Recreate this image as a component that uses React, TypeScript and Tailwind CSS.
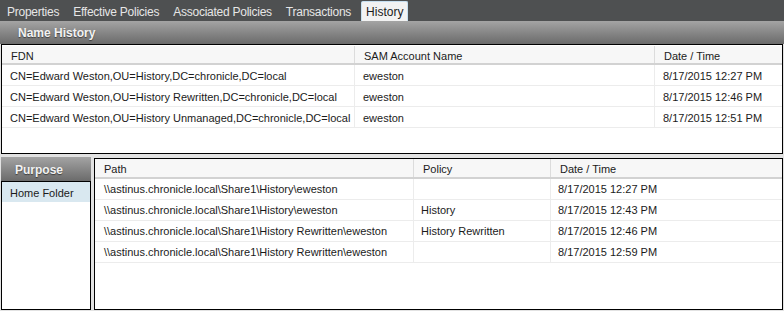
const tabs = ["Properties", "Effective Policies", "Associated Policies", "Transactions", "History"];

const nameRows = [
  ["CN=Edward Weston,OU=History,DC=chronicle,DC=local", "eweston", "8/17/2015 12:27 PM"],
  ["CN=Edward Weston,OU=History Rewritten,DC=chronicle,DC=local", "eweston", "8/17/2015 12:46 PM"],
  ["CN=Edward Weston,OU=History Unmanaged,DC=chronicle,DC=local", "eweston", "8/17/2015 12:51 PM"],
];

const pathRows = [
  ["\\\\astinus.chronicle.local\\Share1\\History\\eweston", "", "8/17/2015 12:27 PM"],
  ["\\\\astinus.chronicle.local\\Share1\\History\\eweston", "History", "8/17/2015 12:43 PM"],
  ["\\\\astinus.chronicle.local\\Share1\\History Rewritten\\eweston", "History Rewritten", "8/17/2015 12:46 PM"],
  ["\\\\astinus.chronicle.local\\Share1\\History Rewritten\\eweston", "", "8/17/2015 12:59 PM"],
];

function HeaderCell({ label, width, last }: { label: string; width: string; last?: boolean }) {
  return (
    <div className={`${width} h-full flex items-center pl-[9px] pt-[3px] whitespace-nowrap ${last ? "" : "border-r border-[#dcdcdc]"}`}>
      {label}
    </div>
  );
}

export default function App() {
  return (
    <div className="w-[784px] h-[311px] flex flex-col bg-[#e2e2e2] overflow-hidden font-['Liberation_Sans',Arial,sans-serif] text-[11px] text-[#1b1b1b]">
      {/* Tab strip */}
      <div className="h-[21px] bg-[#4e5051] flex items-end">
        {tabs.map((t) => {
          const active = t === "History";
          return (
            <div
              key={t}
              className={
                active
                  ? "h-[20px] ml-[3px] px-[4px] pt-[1px] flex items-center bg-[#f2f2f2] border border-b-0 border-[#c6dff0] rounded-t-[2px] text-[12px] text-[#1b1b1b] whitespace-nowrap"
                  : "h-[20px] px-[7px] pt-[1px] flex items-center text-[12px] text-[#e6e6e6] whitespace-nowrap tracking-[-0.25px]"
              }
            >
              {t}
            </div>
          );
        })}
      </div>

      {/* Name History header */}
      <div className="h-[23px] bg-gradient-to-b from-[#a4a4a4] to-[#6b6b6b] flex items-center pl-[18px] pt-[1px] text-[12px] font-bold text-[#f2f2f2] [text-shadow:0_1px_1px_rgba(0,0,0,0.5)]">
        Name History
      </div>

      {/* Name History table */}
      <div className="mx-[1px] h-[110px] border border-black bg-white flex flex-col">
        <div className="h-[20px] flex bg-[#f7f7f7] border-b-2 border-[#d2d2d2] border-t border-t-white">
          <HeaderCell label="FDN" width="w-[353px]" />
          <HeaderCell label="SAM Account Name" width="w-[300px]" />
          <HeaderCell label="Date / Time" width="flex-1" last />
        </div>
        {nameRows.map((r, i) => (
          <div key={i} className="h-[21px] flex items-center border-b border-[#ececec] whitespace-nowrap">
            <div className="w-[353px] pl-[8px] pt-[2px] border-r border-[#ececec] h-full flex items-center">{r[0]}</div>
            <div className="w-[300px] pl-[8px] pt-[2px] border-r border-[#ececec] h-full flex items-center">{r[1]}</div>
            <div className="flex-1 pl-[8px] pt-[2px] h-full flex items-center">{r[2]}</div>
          </div>
        ))}
      </div>

      {/* Bottom section */}
      <div className="flex mt-[3px] mx-[1px] gap-[3px] flex-1 mb-[1px]">
        <div className="w-[90px] flex flex-col">
          <div className="h-[24px] bg-gradient-to-b from-[#a4a4a4] to-[#6b6b6b] flex items-center pl-[14px] pt-[1px] text-[12px] font-bold text-[#f2f2f2] [text-shadow:0_1px_1px_rgba(0,0,0,0.5)]">
            Purpose
          </div>
          <div className="flex-1 border border-black bg-white">
            <div className="h-[20px] bg-[#d9e8f0] flex items-center pl-[8px] pt-[2px]">Home Folder</div>
          </div>
        </div>

        <div className="flex-1 mt-[1px] border border-black bg-white flex flex-col">
          <div className="h-[20px] flex bg-[#f7f7f7] border-b-2 border-[#d2d2d2]">
            <HeaderCell label="Path" width="w-[319px]" />
            <HeaderCell label="Policy" width="w-[137px]" />
            <HeaderCell label="Date / Time" width="flex-1" last />
          </div>
          {pathRows.map((r, i) => (
            <div key={i} className="h-[21px] flex items-center border-b border-[#ececec] whitespace-nowrap">
              <div className="w-[319px] pl-[9px] pt-[1px] border-r border-[#ececec] h-full flex items-center">{r[0]}</div>
              <div className="w-[137px] pl-[7px] pt-[1px] border-r border-[#ececec] h-full flex items-center">{r[1]}</div>
              <div className="flex-1 pl-[7px] pt-[1px] h-full flex items-center">{r[2]}</div>
            </div>
          ))}
        </div>
      </div>
    </div>
  );
}
